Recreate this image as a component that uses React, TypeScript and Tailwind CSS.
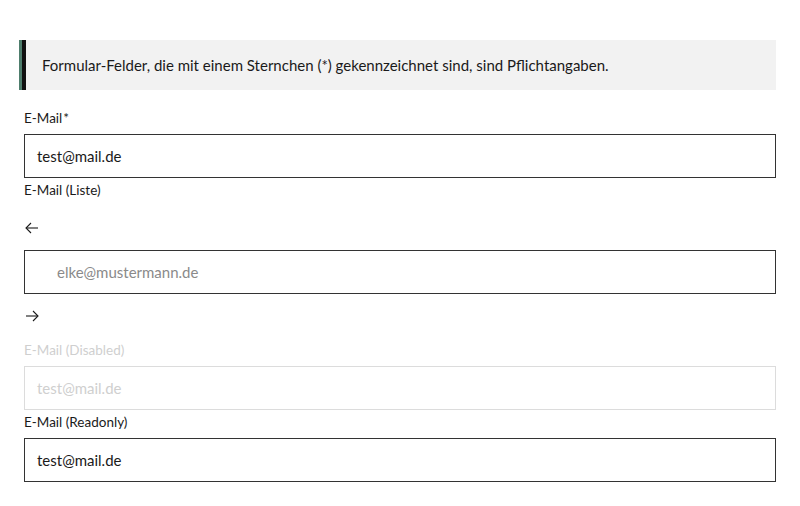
import React from "react";

function Arrow({ dir }: { dir: "left" | "right" }) {
  return (
    <svg width="14" height="12" viewBox="0 0 14 12" fill="none" stroke="#1a1a1a" strokeWidth="1.1">
      {dir === "left" ? (
        <>
          <path d="M1 6H13" />
          <path d="M6 1L1 6L6 11" />
        </>
      ) : (
        <>
          <path d="M1 6H13" />
          <path d="M8 1L13 6L8 11" />
        </>
      )}
    </svg>
  );
}

export default function App() {
  const font = { fontFamily: "Lato, 'Noto Sans', sans-serif" };
  return (
    <div className="w-[800px] h-[506px] bg-white px-6 pt-10 text-[#1a1a1a]" style={font}>
      <div className="-ml-[5px] flex h-[50px] bg-[#f2f2f2]">
        <div className="w-[3px] bg-[#4e7d6c]" />
        <div className="w-[4px] bg-[#111]" />
        <div className="flex items-center pl-[16px] text-[15px]">
          Formular-Felder, die mit einem Sternchen (*) gekennzeichnet sind, sind Pflichtangaben.
        </div>
      </div>

      <div className="mt-[18px] h-5 text-[13.5px] leading-5">E-Mail<span className="ml-[1px]">*</span></div>
      <div className="mt-[6px] flex h-[44px] items-center border border-[#333] pl-3 text-[15px]">
        test@mail.de
      </div>

      <div className="mt-[2px] h-5 text-[13.5px] leading-5">E-Mail (Liste)</div>
      <div className="mt-[18px] flex h-5 items-center pl-[1px]">
        <Arrow dir="left" />
      </div>
      <div className="mt-3 flex h-[44px] items-center border border-[#333] pl-8 text-[15px] text-[#8a8a8a]">
        elke@mustermann.de
      </div>
      <div className="mt-3 flex h-5 items-center pl-[1px]">
        <Arrow dir="right" />
      </div>

      <div className="mt-[14px] h-5 text-[13.5px] leading-5 text-[#cfcfcf]">E-Mail (Disabled)</div>
      <div className="mt-[6px] flex h-[44px] items-center border border-[#dcdcdc] pl-3 text-[15px] text-[#cfcfcf]">
        test@mail.de
      </div>

      <div className="mt-[2px] h-5 text-[13.5px] leading-5">E-Mail (Readonly)</div>
      <div className="mt-[6px] flex h-[44px] items-center border border-[#333] pl-3 text-[15px]">
        test@mail.de
      </div>
    </div>
  );
}
